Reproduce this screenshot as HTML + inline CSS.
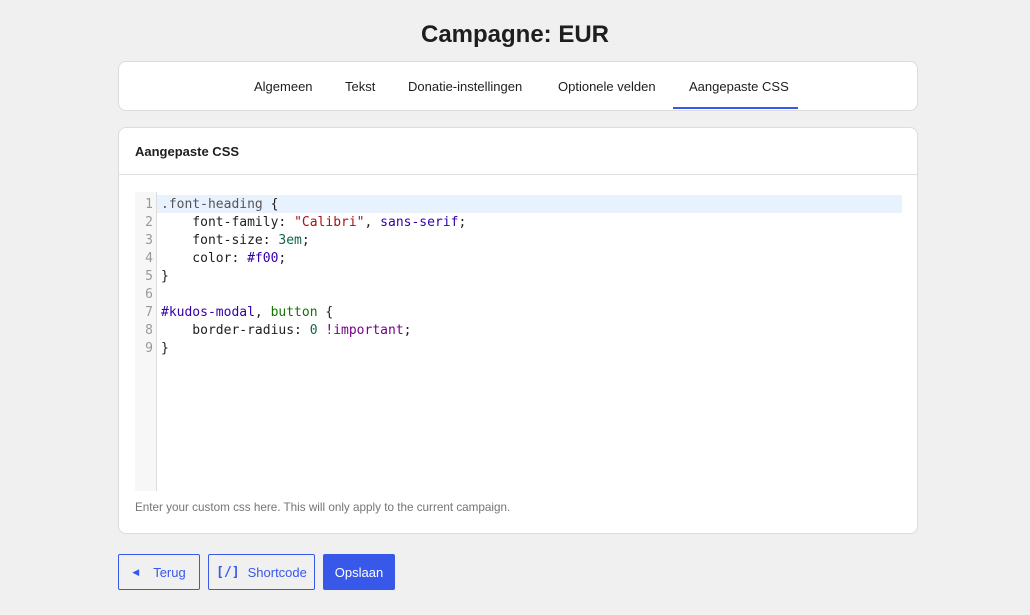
<!DOCTYPE html>
<html><head><style>
*{box-sizing:border-box;margin:0;padding:0}
body{width:1030px;height:615px;background:#f0f0f0;font-family:"Liberation Sans",sans-serif;color:#1e1e1e;position:relative;overflow:hidden}
h1{position:absolute;top:21px;left:0;width:1030px;text-align:center;font-size:24px;font-weight:bold;color:#1e1e1e}
.card{position:absolute;left:118px;width:800px;background:#fff;border:1px solid #dcdcdc;border-radius:8px}
.tabs{top:61px;height:50px}
.tab{position:absolute;top:17px;font-size:13px;color:#1e1e1e;white-space:nowrap}
.ul{position:absolute;left:554px;top:45px;width:125px;height:2px;background:#3858e9}
.main{top:127px;height:407px}
.hd{height:47px;border-bottom:1px solid #e0e0e0;padding:16px 16px;font-size:13px;font-weight:bold}
.ed{position:absolute;left:16px;top:64px;width:767px;height:299px;background:#fff}
.gut{position:absolute;left:0;top:0;width:22px;height:299px;background:#f7f7f7;border-right:1px solid #ddd}
.hl{position:absolute;left:22px;top:3px;width:745px;height:18px;background:#e8f2ff}
pre{position:absolute;top:4px;font-family:"DejaVu Sans Mono",monospace;font-size:13px;line-height:18px}
.ln{left:0;width:18px;text-align:right;color:#999}
.code{left:26px;color:#1e1e1e}
.s{color:#a11}.v{color:#30a}.n{color:#164}.t{color:#170}.k{color:#708}.c{color:#555}
.help{position:absolute;left:16px;top:373px;font-size:11.7px;color:#757575}
.btn{position:absolute;top:554px;height:36px;border:1px solid #3858e9;border-radius:2px;color:#3858e9;font-size:13px;display:flex;align-items:center;justify-content:center;background:transparent}
</style></head><body>
<h1>Campagne: EUR</h1>
<div class="card tabs">
<span class="tab" style="left:135px">Algemeen</span>
<span class="tab" style="left:226px">Tekst</span>
<span class="tab" style="left:289px">Donatie-instellingen</span>
<span class="tab" style="left:439px">Optionele velden</span>
<span class="tab" style="left:570px">Aangepaste CSS</span>
<div class="ul"></div>
</div>
<div class="card main">
<div class="hd">Aangepaste CSS</div>
<div class="ed">
<div class="gut"></div><div class="hl"></div>
<pre class="ln">1
2
3
4
5
6
7
8
9</pre>
<pre class="code"><span class="c">.font-heading</span> {
    font-family: <span class="s">"Calibri"</span>, <span class="v">sans-serif</span>;
    font-size: <span class="n">3em</span>;
    color: <span class="v">#f00</span>;
}

<span class="v">#kudos-modal</span>, <span class="t">button</span> {
    border-radius: <span class="n">0</span> <span class="k">!important</span>;
}</pre>
</div>
<div class="help">Enter your custom css here. This will only apply to the current campaign.</div>
</div>
<div class="btn" style="left:118px;width:82px"><span style="font-size:9px;margin-right:14px">◀</span>Terug</div>
<div class="btn" style="left:208px;width:107px"><b style="margin-right:8px;font-family:'DejaVu Sans Mono',monospace;font-size:13px">[/]</b>Shortcode</div>
<div class="btn" style="left:323px;width:72px;background:#3858e9;color:#fff">Opslaan</div>
</body></html>
